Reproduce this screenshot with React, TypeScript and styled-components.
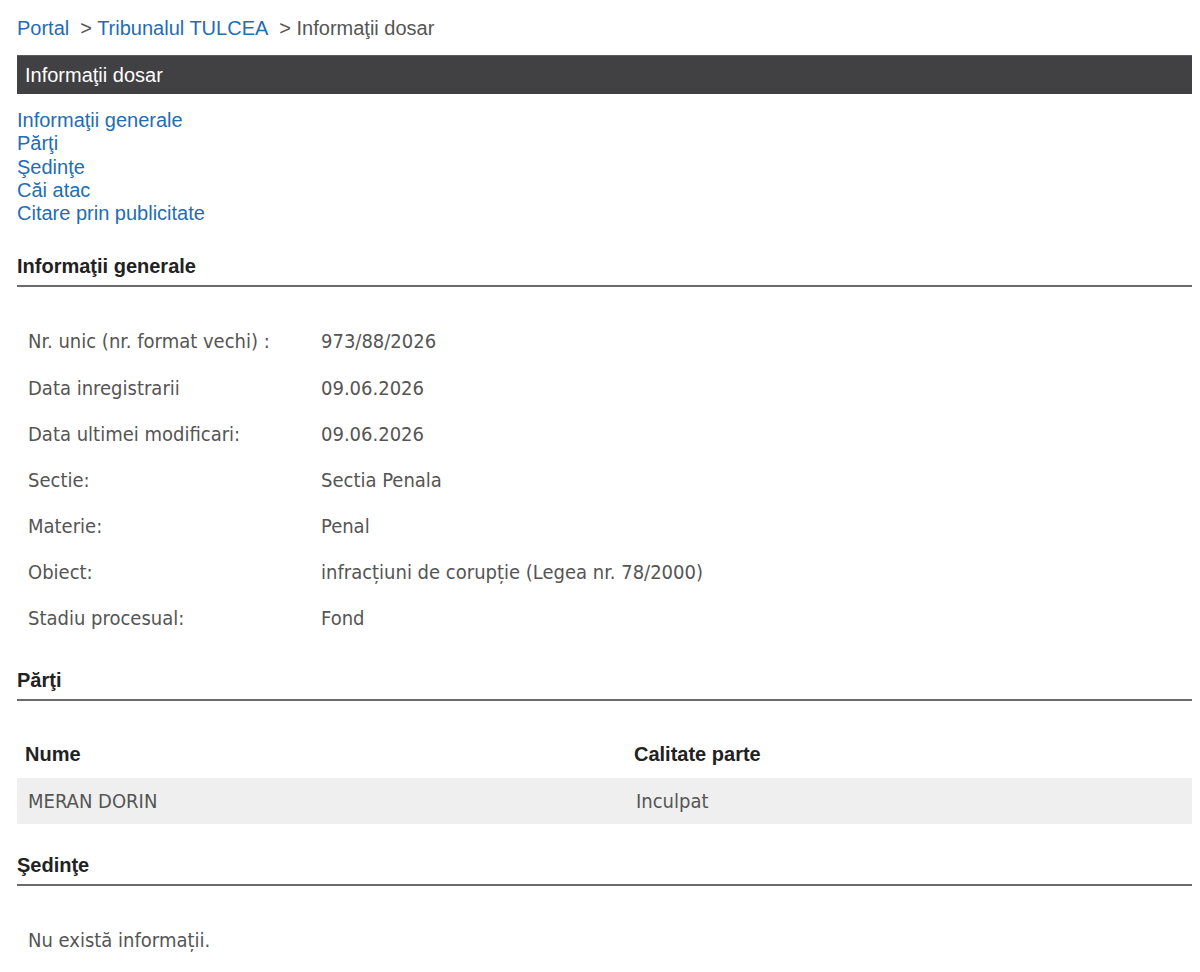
import styled, { createGlobalStyle } from 'styled-components';

const GlobalStyle = createGlobalStyle`
  body {
    margin: 0;
    background: #ffffff;
    font-family: "Liberation Sans", Arial, sans-serif;
  }
`;

const linkBlue = '#1f6db4';
const textGray = '#555555';

const Page = styled.div`
  padding: 17px 8px 0 17px;
`;

const Breadcrumb = styled.div`
  font-size: 20px;
  line-height: 23px;
  color: ${textGray};
`;

const Link = styled.a`
  color: ${linkBlue};
  text-decoration: none;
  cursor: pointer;
`;

const Sep = styled.span`
  margin-left: 11px;
`;

const TitleBar = styled.div`
  margin-top: 15px;
  height: 39px;
  display: flex;
  align-items: center;
  padding-left: 8px;
  background: #414042;
  border-top: 1px solid #5c5b5c;
  box-sizing: border-box;
  color: #ffffff;
  font-size: 20px;
`;

const LinkList = styled.div`
  margin-top: 15px;
  display: flex;
  flex-direction: column;
  font-size: 20px;
  line-height: 23.25px;
`;

const Section = styled.section<{ $gap?: number }>`
  margin-top: ${({ $gap }) => $gap ?? 29}px;
`;

const SectionTitle = styled.h2`
  margin: 0;
  font-size: 20px;
  line-height: 23px;
  font-weight: bold;
  color: #222222;
  padding-bottom: 7px;
  border-bottom: 2px solid #6b6b6b;
`;

const SectionBody = styled.div`
  padding-top: 31px;
`;

const dataFont = `"DejaVu Sans Condensed", "DejaVu Sans", Tahoma, sans-serif`;

const InfoRow = styled.div`
  display: grid;
  grid-template-columns: 293px 1fr;
  height: 46.2px;
  align-items: center;
  padding-left: 11px;
  font-family: ${dataFont};
  font-stretch: condensed;
  font-size: 20px;
  color: ${textGray};
`;

const TableRow = styled.div<{ $head?: boolean }>`
  display: grid;
  grid-template-columns: 609px 1fr;
  height: 46px;
  align-items: center;
  background: ${({ $head }) => ($head ? 'transparent' : '#efefef')};
  color: ${({ $head }) => ($head ? '#222222' : textGray)};
  font-family: ${({ $head }) => ($head ? '"Liberation Sans", Arial, sans-serif' : dataFont)};
  font-stretch: condensed;
  font-weight: ${({ $head }) => ($head ? 'bold' : 'normal')};
  font-size: 20px;
`;

const Cell = styled.div<{ $pad: number }>`
  padding-left: ${({ $pad }) => $pad}px;
`;

const Empty = styled.div`
  height: 46px;
  display: flex;
  align-items: center;
  padding-left: 11px;
  font-family: ${dataFont};
  font-stretch: condensed;
  font-size: 20px;
  color: ${textGray};
`;

const info: [string, string][] = [
  ['Nr. unic (nr. format vechi) :', '973/88/2026'],
  ['Data inregistrarii', '09.06.2026'],
  ['Data ultimei modificari:', '09.06.2026'],
  ['Sectie:', 'Sectia Penala'],
  ['Materie:', 'Penal'],
  ['Obiect:', 'infracțiuni de corupție (Legea nr. 78/2000)'],
  ['Stadiu procesual:', 'Fond'],
];

export default function App() {
  return (
    <>
      <GlobalStyle />
      <Page>
        <Breadcrumb>
          <Link>Portal</Link>
          <Sep>&gt; </Sep>
          <Link>Tribunalul TULCEA</Link>
          <Sep>&gt; Informaţii dosar</Sep>
        </Breadcrumb>

        <TitleBar>Informaţii dosar</TitleBar>

        <LinkList>
          <Link>Informaţii generale</Link>
          <Link>Părţi</Link>
          <Link>Şedinţe</Link>
          <Link>Căi atac</Link>
          <Link>Citare prin publicitate</Link>
        </LinkList>

        <Section $gap={30}>
          <SectionTitle>Informaţii generale</SectionTitle>
          <SectionBody>
            {info.map(([k, v]) => (
              <InfoRow key={k}>
                <span>{k}</span>
                <span>{v}</span>
              </InfoRow>
            ))}
          </SectionBody>
        </Section>

        <Section $gap={27}>
          <SectionTitle>Părţi</SectionTitle>
          <SectionBody>
            <TableRow $head>
              <Cell $pad={8}>Nume</Cell>
              <Cell $pad={8}>Calitate parte</Cell>
            </TableRow>
            <TableRow>
              <Cell $pad={11}>MERAN DORIN</Cell>
              <Cell $pad={10}>Inculpat</Cell>
            </TableRow>
          </SectionBody>
        </Section>

        <Section $gap={30}>
          <SectionTitle>Şedinţe</SectionTitle>
          <SectionBody>
            <Empty>Nu există informații.</Empty>
          </SectionBody>
        </Section>
      </Page>
    </>
  );
}
